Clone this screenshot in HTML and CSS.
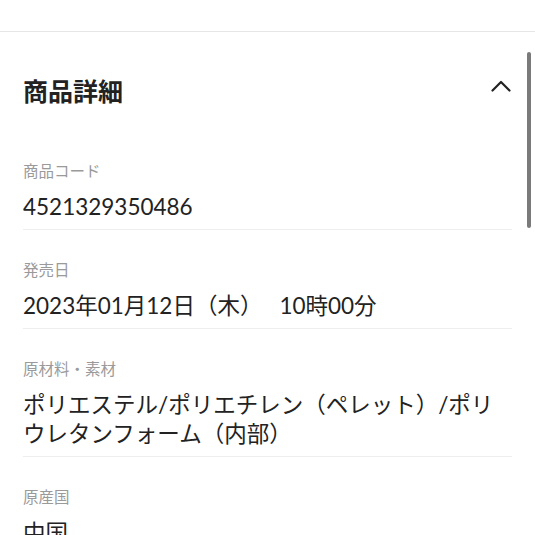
FILE: index.html
```html
<!DOCTYPE html>
<html lang="ja">
<head>
  <meta charset="UTF-8">
  <meta name="viewport" content="width=device-width, initial-scale=1.0">
  <title>商品詳細</title>
  <link rel="stylesheet" href="styles.css">
</head>
<body>
  <div class="topbar"></div>

  <div class="details">
    <div class="details-head">
      <h2>商品詳細</h2>
      <svg class="chevron" width="20" height="12" viewBox="0 0 20 12">
        <path d="M1.5 10.5 L10 2 L18.5 10.5" fill="none" stroke="#222" stroke-width="2.2" stroke-linecap="round" stroke-linejoin="round"/>
      </svg>
    </div>

    <div class="item">
      <div class="label">商品コード</div>
      <div class="value">4521329350486</div>
    </div>
    <div class="item">
      <div class="label">発売日</div>
      <div class="value">2023年01月12日（木）　 10時00分</div>
    </div>
    <div class="item">
      <div class="label">原材料・素材</div>
      <div class="value">ポリエステル/ポリエチレン（ペレット）/ポリウレタンフォーム（内部）</div>
    </div>
    <div class="item">
      <div class="label">原産国</div>
      <div class="value">中国</div>
    </div>
  </div>

  <div class="scrollbar"></div>
</body>
</html>
```

FILE: styles.css
```css
body {
  font-family: Lato, "Noto Sans CJK JP", sans-serif;
  margin: 0;
  padding: 0;
  background-color: #fff;
  color: #222;
  overflow: hidden;
}

.topbar {
  height: 31px;
  border-bottom: 1px solid #e6e6e6;
}

.details {
  padding: 39px 23px 0;
}

.details-head {
  display: flex;
  align-items: center;
  justify-content: space-between;
  height: 40px;
  margin-bottom: 20px;
}

.details-head h2 {
  margin: 0;
  font-size: 25px;
  font-weight: 700;
  line-height: 40px;
}

.chevron {
  margin: 0 1px 10px 0;
}

.item {
  padding: 29px 0 8px;
  border-bottom: 1px solid #eee;
}

.label {
  font-size: 15.5px;
  line-height: 22px;
  color: #9a9a9a;
  margin-bottom: 10px;
}

.value {
  font-size: 22.5px;
  line-height: 29px;
}

.scrollbar {
  position: absolute;
  top: 52px;
  left: 527px;
  width: 4px;
  height: 176px;
  border-radius: 2px;
  background-color: #7a7a7a;
}
```
